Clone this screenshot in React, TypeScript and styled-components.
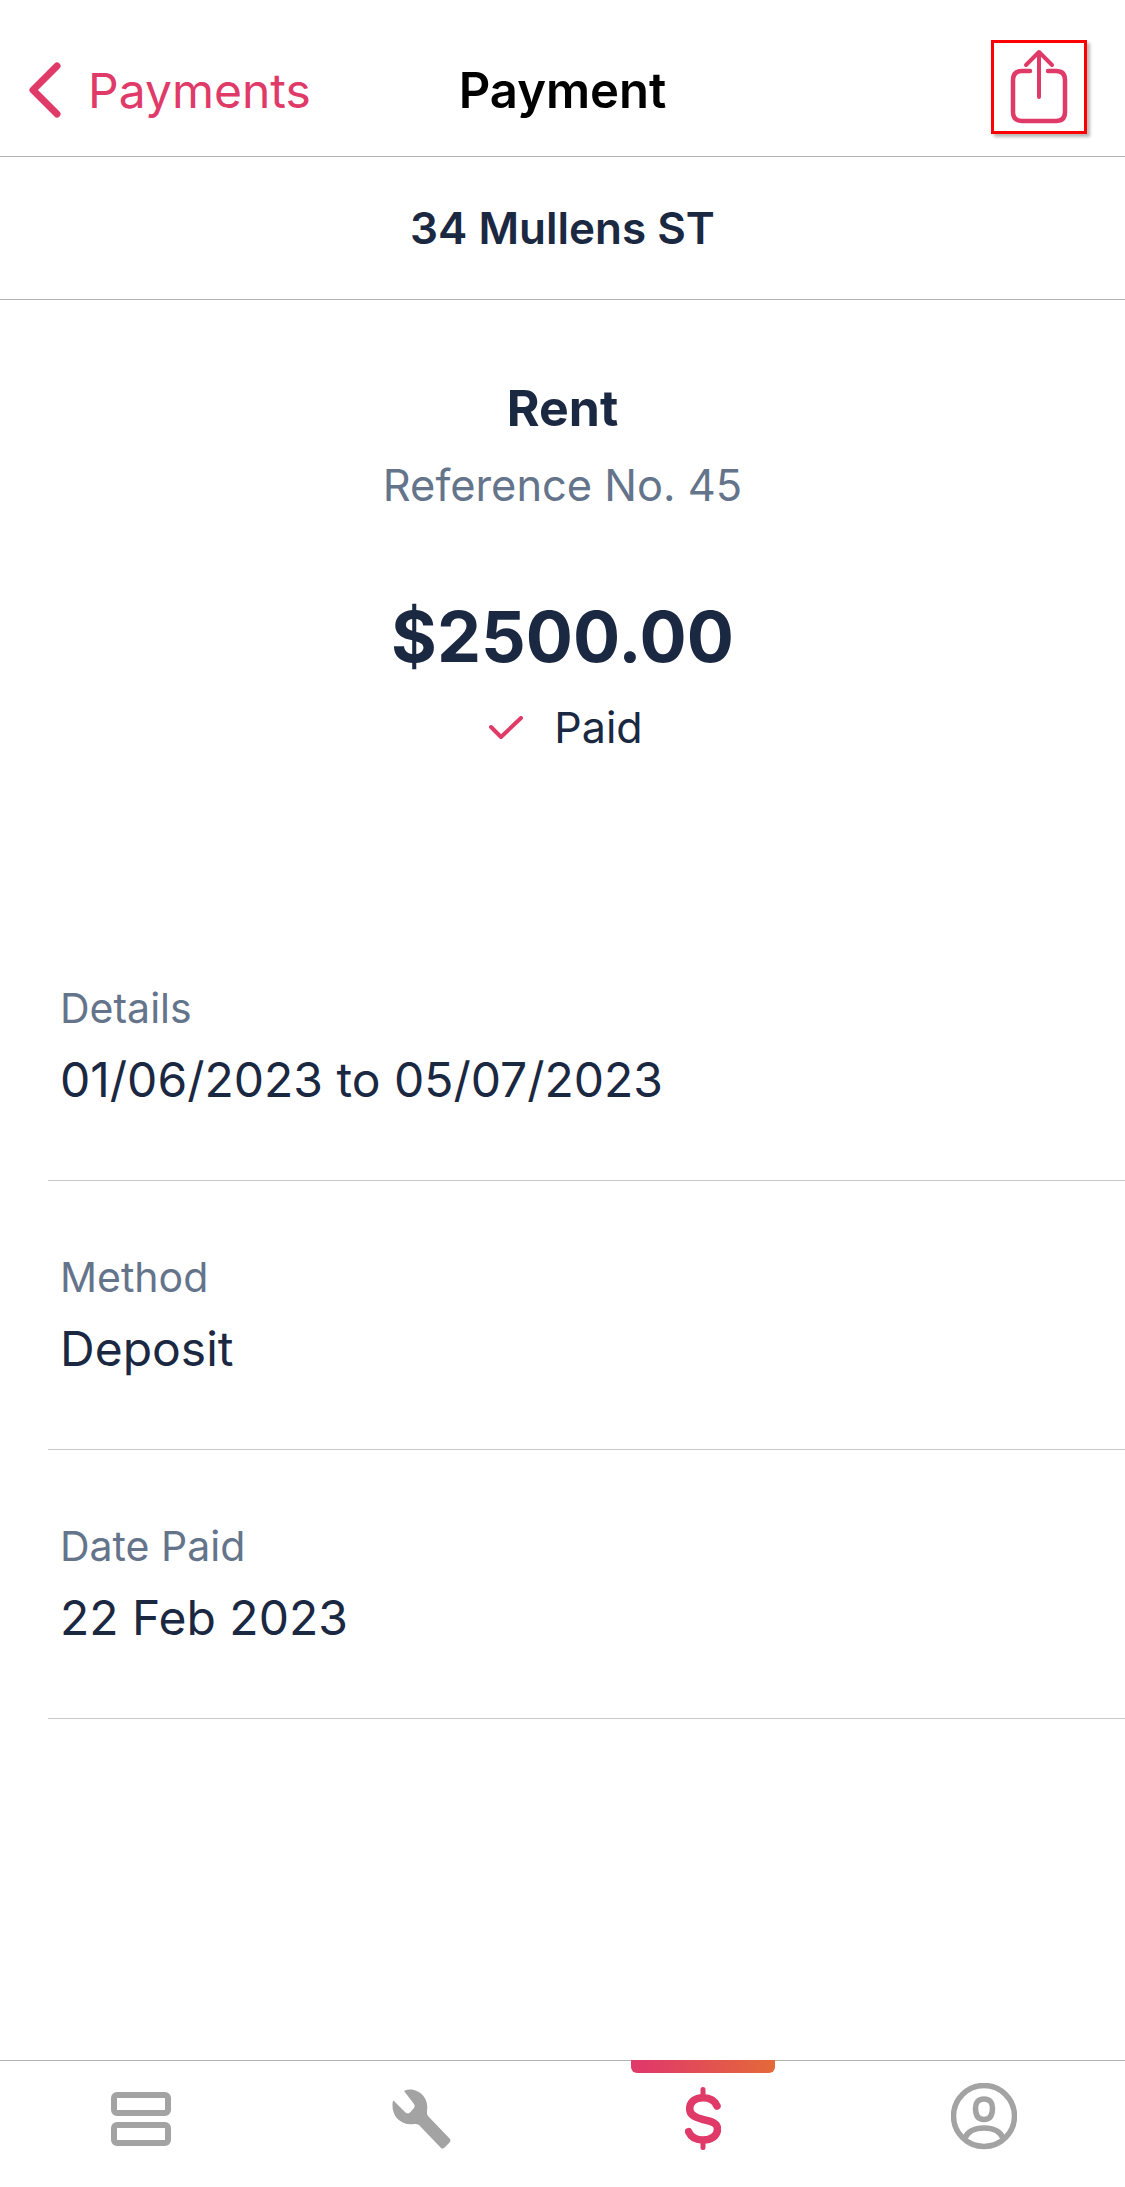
import styled, { createGlobalStyle } from "styled-components";

const GlobalStyle = createGlobalStyle`
  html, body {
    margin: 0;
    padding: 0;
    background: #fff;
  }
  body {
    font-family: Inter, "Liberation Sans", sans-serif;
  }
`;

const Page = styled.div`
  width: 1125px;
  height: 2187px;
  display: flex;
  flex-direction: column;
  overflow: hidden;
  background: #fff;
  color: #1b2842;
`;

const NavBar = styled.header`
  height: 157px;
  flex: none;
  display: grid;
  grid-template-columns: 1fr auto 1fr;
  align-items: center;
  padding-top: 18px;
  border-bottom: 1.5px solid #b2b2b2;
  box-sizing: border-box;
`;

const BackLink = styled.div`
  display: flex;
  align-items: center;
  gap: 27px;
  padding: 6px 0 0 27px;
  font-size: 48px;
  color: #e03a68;
`;

const NavTitle = styled.div`
  padding-top: 6px;
  font-size: 49px;
  font-weight: 600;
  color: #000;
`;

const NavRight = styled.div`
  display: flex;
  justify-content: flex-end;
  padding-right: 38px;
`;

const HighlightBox = styled.div`
  width: 96px;
  height: 94px;
  box-sizing: border-box;
  border: 3px solid #ff0000;
  box-shadow: 3px 3px 3px rgba(0, 0, 0, 0.28);
  display: flex;
  align-items: center;
  justify-content: center;
`;

const PropertyBar = styled.div`
  height: 143px;
  flex: none;
  box-sizing: border-box;
  display: flex;
  align-items: center;
  justify-content: center;
  border-bottom: 1.5px solid #b2b2b2;
  font-size: 44px;
  font-weight: 600;
`;

const Summary = styled.section`
  flex: none;
  display: flex;
  flex-direction: column;
  align-items: center;
  padding-top: 80px;
`;

const SummaryTitle = styled.div`
  font-size: 50px;
  line-height: 57px;
  font-weight: 700;
`;

const Reference = styled.div`
  font-size: 43.4px;
  line-height: 51px;
  margin-top: 23px;
  color: #64748b;
`;

const Amount = styled.div`
  font-size: 70px;
  line-height: 87px;
  font-weight: 700;
  margin-top: 82px;
`;

const Status = styled.div`
  display: flex;
  align-items: center;
  gap: 31px;
  padding-left: 7px;
  font-size: 43px;
  line-height: 53px;
  margin-top: 21px;
`;

const DetailList = styled.section`
  flex: none;
  margin-top: 158px;
  padding-left: 48px;
`;

const DetailRow = styled.div`
  height: 269px;
  box-sizing: border-box;
  padding: 71px 0 0 12px;
  border-bottom: 1.5px solid #c9c9c9;
`;

const DetailLabel = styled.div`
  font-size: 41px;
  line-height: 50px;
  color: #64748b;
`;

const DetailValue = styled.div`
  font-size: 48px;
  line-height: 58px;
  margin-top: 17.5px;
`;

const TabBar = styled.nav`
  margin-top: auto;
  height: 127px;
  flex: none;
  box-sizing: border-box;
  display: grid;
  grid-template-columns: repeat(4, 1fr);
  border-top: 1.5px solid #b2b2b2;
`;

const Tab = styled.div`
  position: relative;
  display: flex;
  justify-content: center;
  align-items: center;
  padding-bottom: 11px;
`;

const ActiveBar = styled.div`
  position: absolute;
  top: -1px;
  left: 50%;
  width: 144px;
  height: 13px;
  margin-left: -72px;
  border-radius: 0 0 6px 6px;
  background: linear-gradient(80deg, #e03a68 10%, #e46a38 100%);
`;

function ChevronIcon() {
  return (
    <svg width="34" height="56" viewBox="0 0 34 56" fill="none">
      <path d="M30 4 L6 28 L30 52" stroke="#e03a68" strokeWidth="7" strokeLinecap="round" strokeLinejoin="round" />
    </svg>
  );
}

function ShareIcon() {
  return (
    <svg width="60" height="76" viewBox="0 0 60 76" fill="none" stroke="#e03a68" strokeLinecap="round" strokeLinejoin="round">
      <path d="M21 22 H13 Q4 22 4 31 V63 Q4 72 13 72 H47 Q56 72 56 63 V31 Q56 22 47 22 H39" strokeWidth="4.5" />
      <path d="M30 48 V3 M17 16 L30 3 L43 16" strokeWidth="4" />
    </svg>
  );
}

function CheckIcon() {
  return (
    <svg width="34" height="24" viewBox="0 0 34 24" fill="none">
      <path d="M2 11 L12 21 L32 2" stroke="#e03a68" strokeWidth="4" strokeLinecap="round" strokeLinejoin="round" />
    </svg>
  );
}

function ListTabIcon() {
  return (
    <svg width="60" height="54" viewBox="0 0 60 54" fill="none" stroke="#a3a3a3" strokeWidth="6">
      <rect x="3" y="3" width="54" height="18" rx="3" />
      <rect x="3" y="33" width="54" height="18" rx="3" />
    </svg>
  );
}

function WrenchTabIcon() {
  return (
    <svg width="60" height="60" viewBox="0 0 60 60">
      <path
        d="M12 2 Q14 0 20 0.5 C30 2 37 11 35 22 Q34.500 25 36 27 L58 50 Q59 52 58 53 L52 59 Q50 60 49 59 L27 36 Q25 34.500 22 35 C10 37 0 28 0.500 16 Q0.500 11 2 12 L14 24 Q16 25 18 23.500 L22 19 Q23.500 17 22 15 Z"
        fill="#a3a3a3"
      />
    </svg>
  );
}

function DollarTabIcon() {
  return (
    <svg width="36" height="63" viewBox="0 0 36 63" fill="none" stroke="#e03a68" strokeLinecap="round">
      <path d="M18 2.500 V10 M18 53 V60.500" strokeWidth="5" />
      <path
        d="M32 19 C30 14 25 10.700 18 10.700 C10 10.700 4.700 15 4.700 22 C4.700 28 10 30.500 18 32.500 C27 34.500 32.500 36 32.500 42 C32.500 49 26 53 18 53 C11 53 6 50 3.600 44.700"
        strokeWidth="7.500"
      />
    </svg>
  );
}

function ProfileTabIcon() {
  return (
    <svg width="66" height="72" viewBox="0 0 66 72" fill="none" stroke="#a3a3a3" strokeWidth="5.500">
      <ellipse cx="33" cy="33" rx="30.500" ry="30.500" />
      <path d="M33 16 C27 16 24.500 20 24.500 25 C24.500 32 27 36.500 33 36.500 C39 36.500 41.500 32 41.500 25 C41.500 20 39 16 33 16 Z" />
      <path d="M14 55 C17 48 24 45 33 45 C42 45 49 48 52 55" />
    </svg>
  );
}

export default function App() {
  return (
    <Page>
      <GlobalStyle />
      <NavBar>
        <BackLink>
          <ChevronIcon />
          <span>Payments</span>
        </BackLink>
        <NavTitle>Payment</NavTitle>
        <NavRight>
          <HighlightBox>
            <ShareIcon />
          </HighlightBox>
        </NavRight>
      </NavBar>
      <PropertyBar>34 Mullens ST</PropertyBar>
      <Summary>
        <SummaryTitle>Rent</SummaryTitle>
        <Reference>Reference No. 45</Reference>
        <Amount>$2500.00</Amount>
        <Status>
          <CheckIcon />
          <span>Paid</span>
        </Status>
      </Summary>
      <DetailList>
        <DetailRow>
          <DetailLabel>Details</DetailLabel>
          <DetailValue>01/06/2023 to 05/07/2023</DetailValue>
        </DetailRow>
        <DetailRow>
          <DetailLabel>Method</DetailLabel>
          <DetailValue>Deposit</DetailValue>
        </DetailRow>
        <DetailRow>
          <DetailLabel>Date Paid</DetailLabel>
          <DetailValue>22 Feb 2023</DetailValue>
        </DetailRow>
      </DetailList>
      <TabBar>
        <Tab>
          <ListTabIcon />
        </Tab>
        <Tab>
          <WrenchTabIcon />
        </Tab>
        <Tab>
          <ActiveBar />
          <DollarTabIcon />
        </Tab>
        <Tab>
          <ProfileTabIcon />
        </Tab>
      </TabBar>
    </Page>
  );
}
